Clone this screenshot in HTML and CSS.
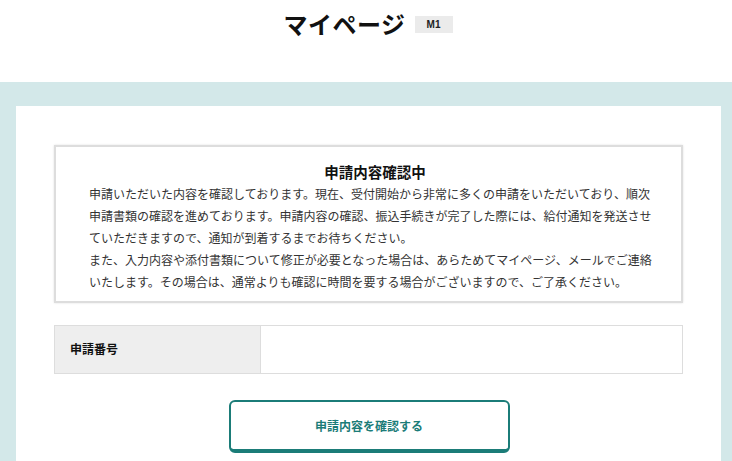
FILE: index.html
```html
<!DOCTYPE html>
<html lang="ja">
<head>
    <meta charset="UTF-8">
    <meta name="viewport" content="width=device-width, initial-scale=1.0">
    <title>マイページ</title>
    <link rel="stylesheet" href="styles.css">
</head>
<body>
    <header class="page-header">
        <h1 class="page-title">マイページ</h1>
        <span class="badge">M1</span>
    </header>
    <main class="band">
        <div class="card">
            <section class="notice">
                <h2 class="notice-title">申請内容確認中</h2>
                <p class="notice-text">申請いただいた内容を確認しております。現在、受付開始から非常に多くの申請をいただいており、順次<br>申請書類の確認を進めております。申請内容の確認、振込手続きが完了した際には、給付通知を発送させ<br>ていただきますので、通知が到着するまでお待ちください。</p>
                <p class="notice-text">また、入力内容や添付書類について修正が必要となった場合は、あらためてマイページ、メールでご連絡<br>いたします。その場合は、通常よりも確認に時間を要する場合がございますので、ご了承ください。</p>
            </section>
            <table class="info-table">
                <tr>
                    <th>申請番号</th>
                    <td></td>
                </tr>
            </table>
            <div class="actions">
                <a href="#" class="confirm-button">申請内容を確認する</a>
            </div>
        </div>
    </main>
</body>
</html>
```

FILE: styles.css
```css
body {
    margin: 0;
    padding: 0;
    font-family: "Noto Sans CJK JP", "Noto Sans", sans-serif;
    color: #333333;
    background: #ffffff;
}
.page-header {
    height: 82px;
    display: flex;
    justify-content: center;
    align-items: flex-start;
    gap: 9px;
    padding-left: 4px;
    box-sizing: border-box;
}
.page-title {
    margin: 6px 0 0;
    font-size: 24px;
    line-height: 36px;
    font-weight: bold;
    color: #111111;
    letter-spacing: 0.5px;
}
.badge {
    margin-top: 16px;
    width: 38px;
    height: 17px;
    line-height: 17px;
    text-align: center;
    background: #ebebeb;
    font-size: 10px;
    font-weight: bold;
    color: #222222;
    font-family: "Liberation Sans", sans-serif;
}
.band {
    display: block;
    background: #d3e8e9;
    padding: 24px 11px 0 16px;
    min-height: 379px;
    box-sizing: border-box;
}
.card {
    background: #ffffff;
    padding: 39px 38px 30px 38px;
}
.notice {
    border: 2px solid #dddddd;
    box-shadow: 0 0 2px rgba(0, 0, 0, 0.12);
    padding: 14px 20px 8px 33px;
}
.notice-title {
    margin: 0;
    text-align: center;
    font-size: 14.5px;
    line-height: 22px;
    font-weight: bold;
    color: #111111;
}
.notice-text {
    margin: 0;
    font-size: 12px;
    line-height: 22px;
    white-space: nowrap;
    color: #333333;
}
.info-table {
    width: 100%;
    margin-top: 22px;
    border-collapse: collapse;
}
.info-table th,
.info-table td {
    border: 1px solid #dddddd;
    height: 44px;
    padding: 0;
}
.info-table th {
    width: 190px;
    background: #eeeeee;
    text-align: left;
    padding-left: 15px;
    padding-bottom: 3px;
    font-size: 12px;
    font-weight: bold;
    color: #111111;
}
.actions {
    display: flex;
    justify-content: center;
    margin-top: 26px;
}
.confirm-button {
    display: block;
    width: 277px;
    height: 47px;
    line-height: 47px;
    text-align: center;
    border: 2px solid #1b7c78;
    border-bottom-width: 4px;
    border-radius: 6px;
    color: #1b7c78;
    font-size: 12px;
    font-weight: bold;
    text-decoration: none;
    margin-left: 1px;
}
```
